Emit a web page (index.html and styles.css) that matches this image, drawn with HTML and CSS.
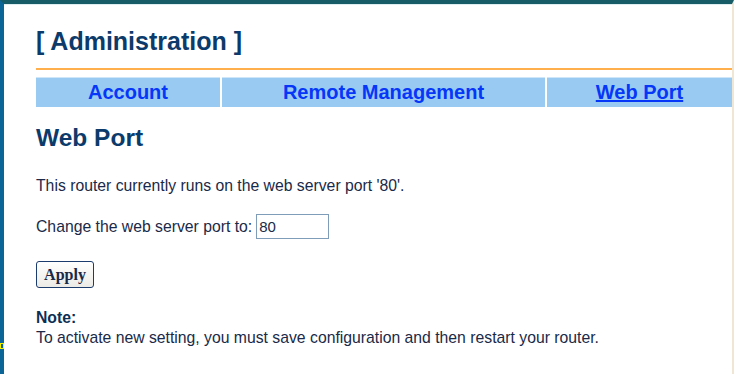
FILE: index.html
```html
<!DOCTYPE html>
<html lang="en">
<head>
    <meta charset="UTF-8">
    <title>Administration - Web Port</title>
    <link rel="stylesheet" href="styles.css">
</head>
<body>
    <div class="frame">
        <div class="page">
            <h1 class="title">[ Administration ]</h1>
            <div class="tabs">
                <a class="tab tab-account" href="#">Account</a>
                <a class="tab tab-remote" href="#">Remote Management</a>
                <a class="tab tab-web active" href="#">Web Port</a>
            </div>
            <h2 class="heading">Web Port</h2>
            <p class="text">This router currently runs on the web server port '80'.</p>
            <form class="port-form">
                <label class="text" for="port">Change the web server port to:</label>
                <input type="text" id="port" value="80">
            </form>
            <button type="button" class="apply">Apply</button>
            <div class="note">
                <strong>Note:</strong>
                <p class="text">To activate new setting, you must save configuration and then restart your router.</p>
            </div>
        </div>
        <span class="marker"></span>
    </div>
</body>
</html>
```

FILE: styles.css
```css
body {
    margin: 0;
    padding: 0;
    background-color: white;
    font-family: "Liberation Sans", Arial, sans-serif;
    overflow: hidden;
}
.frame {
    position: relative;
    height: 374px;
    border-top: 4px solid #175c66;
    border-left: 4px solid #0b6597;
    border-right: 2px solid #efe6d4;
    box-sizing: border-box;
}
.page {
    padding: 20px 0 0 32px;
    border-top: 1px solid #dfeef0;
}
.title {
    margin: 0;
    font-size: 25px;
    color: #0c3b6b;
    font-weight: bold;
    line-height: 32px;
}
.tabs {
    margin-top: 11px;
    border-top: 2px solid #ffb04c;
    padding-top: 7px;
    display: flex;
    gap: 2px;
}
.tab {
    background-color: #99cbf2;
    border-top: 1px solid #cfe6f8;
    color: #0636f8;
    font-weight: bold;
    font-size: 20px;
    text-align: center;
    text-decoration: none;
    line-height: 29px;
}
.tab-account { width: 184px; }
.tab-remote { width: 323px; }
.tab-web { flex: 1; }
.tab.active { text-decoration: underline; }
.heading {
    margin: 16px 0 0;
    font-size: 24.5px;
    color: #0c3b6b;
    font-weight: bold;
    line-height: 30px;
}
.text {
    margin: 0;
    font-size: 15.75px;
    line-height: 18px;
    color: #1a2a48;
}
.heading + .text {
    margin-top: 24px;
}
.port-form {
    margin-top: 19px;
    display: flex;
    align-items: center;
    gap: 4px;
}
.port-form input {
    width: 73px;
    height: 25px;
    box-sizing: border-box;
    border: 1px solid #7f9db9;
    padding: 0 2px;
    font-family: "Liberation Sans", Arial, sans-serif;
    font-size: 15px;
    color: #1a2a48;
}
.apply {
    display: block;
    margin-top: 22px;
    width: 58px;
    height: 27px;
    padding: 0;
    background: linear-gradient(#ffffff, #ecebe6);
    border: 1px solid #1d3c6e;
    border-radius: 3px;
    font-family: "Liberation Serif", "Times New Roman", serif;
    font-weight: bold;
    font-size: 16px;
    color: #1a2a48;
}
.note {
    margin-top: 20px;
}
.note strong {
    display: block;
    font-size: 15.75px;
    color: #0c2f55;
    line-height: 20px;
}
.note .text {
    line-height: 20px;
}
.marker {
    position: absolute;
    left: -4px;
    top: 339px;
    width: 2px;
    height: 4px;
    border: 1px solid #f2f200;
}
```
